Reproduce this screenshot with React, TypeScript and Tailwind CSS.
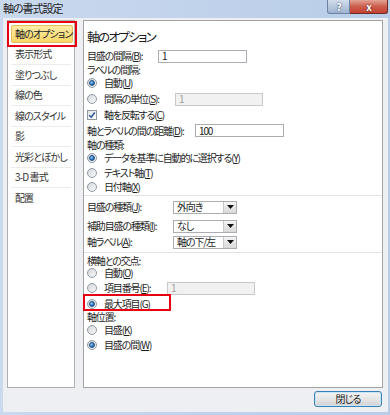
import type { ReactNode } from "react";

const jp = "[font-family:'Noto_Sans_CJK_JP',sans-serif] [font-feature-settings:'palt']";

function Key({ t, k, colon }: { t: string; k: string; colon?: boolean }) {
  return (
    <>
      {t}(<u>{k}</u>){colon ? ":" : ""}
    </>
  );
}

function Radio({ on }: { on?: boolean }) {
  return (
    <span className="flex h-[10px] w-[10px] shrink-0 items-center justify-center rounded-full border border-[#8e99a5] bg-linear-to-br from-[#d4d6d9] to-[#fafafa]">
      {on && (
        <span className="h-[6px] w-[6px] rounded-full border border-[#1d4f85] bg-radial-[at_35%_35%] from-[#a9d6f7] via-[#2f7ac4] to-[#1a548f]" />
      )}
    </span>
  );
}

function Check() {
  return (
    <span className="flex h-[10px] w-[10px] shrink-0 items-center justify-center border border-[#8e99a5] bg-linear-to-br from-[#dfe1e4] to-white">
      <svg width="8" height="8" viewBox="0 0 8 8">
        <path d="M1.2 4.2 L3.2 6.2 L6.8 1.5" fill="none" stroke="#2a4f9c" strokeWidth="1.5" />
      </svg>
    </span>
  );
}

function Input({ w, v, off }: { w: string; v: string; off?: boolean }) {
  return (
    <div
      className={`flex h-[13px] shrink-0 items-center border pl-[3px] text-[10px] leading-none ${w} ${
        off ? "border-[#c8c8c8] bg-[#f1f1f1] text-[#a0a0a0]" : "border-[#abadb3] bg-white text-[#222]"
      }`}
    >
      {v}
    </div>
  );
}

function Select({ v }: { v: string }) {
  return (
    <div className="flex h-[13px] w-[64px] shrink-0 items-stretch border border-[#abadb3] bg-white">
      <span className="flex flex-1 items-center pl-[3px] text-[10px] leading-none">{v}</span>
      <span className="flex w-[13px] items-center justify-center border-l border-[#c6c6c6] bg-linear-to-b from-[#f5f5f5] to-[#d8d8d8]">
        <svg width="7" height="4" viewBox="0 0 7 4">
          <path d="M0 0h7L3.5 4z" fill="#111" />
        </svg>
      </span>
    </div>
  );
}

function Row({ h, children }: { h: string; children: ReactNode }) {
  return <div className={`flex shrink-0 items-center whitespace-nowrap ${h}`}>{children}</div>;
}

function RadioRow({ h, on, children }: { h: string; on?: boolean; children: ReactNode }) {
  return (
    <Row h={h}>
      <Radio on={on} />
      <span className="ml-[7px] flex items-center">{children}</span>
    </Row>
  );
}

const sideItems = ["表示形式", "塗りつぶし", "線の色", "線のスタイル", "影", "光彩とぼかし", "3-D 書式", "配置"];

export default function App() {
  return (
    <div className={`relative flex h-[415px] w-[390px] flex-col overflow-hidden bg-linear-to-r from-[#c9d9ee] to-[#b9cde8] text-[10px] leading-none tracking-[-0.9px] text-[#1e1e1e] ${jp}`}>
      {/* title bar */}
      <div className="flex h-[18px] shrink-0 items-start">
        <span className="whitespace-nowrap pl-[3px] pt-[3px] text-[11px] leading-none tracking-[-1px] text-[#222]">軸の書式設定</span>
        <div className="ml-auto mr-[2px] flex">
          <div className="flex h-[14px] w-[23px] items-center justify-center rounded-bl-[3px] border border-t-0 border-[#6d83a3] bg-linear-to-b from-[#d3deec] to-[#9fb3d0] text-[10px] font-bold leading-none text-white [text-shadow:0_0_2px_#1d2d48]">
            ?
          </div>
          <div className="flex h-[14px] w-[38px] items-center justify-center rounded-br-[3px] border border-l-0 border-t-0 border-[#6e2a24] bg-linear-to-b from-[#e3a394] via-[#cc5d4d] to-[#c2422f] text-[10px] font-bold leading-none text-white [text-shadow:0_0_2px_#4a0e08]">
            x
          </div>
        </div>
      </div>

      {/* client area */}
      <div className="ml-[3px] mr-[2px] flex flex-1 flex-col bg-[#eeeff2] pl-[4px] pr-[5px] pt-[2px]">
        <div className="flex h-[368px] gap-[8px]">
          {/* left list */}
          <div className="flex w-[68px] shrink-0 flex-col border border-[#b0b0b0] bg-white pt-[3px]">
            <div className="flex h-[20.5px] shrink-0 items-center">
              <div className="ml-[3px] mr-[1px] flex h-[18px] flex-1 items-center whitespace-nowrap rounded-[2px] border border-[#e1bf5c] bg-linear-to-b from-[#fdeba4] to-[#f9d766] pl-[3px] text-[#222]">
                軸のオプション
              </div>
            </div>
            {sideItems.map((s, i) => (
              <div
                key={s}
                className={`mx-[3px] flex h-[20.5px] shrink-0 items-center whitespace-nowrap pl-[4px] text-[#333] ${
                  i < sideItems.length - 1 ? "border-b border-[#ececec]" : ""
                }`}
              >
                {s}
              </div>
            ))}
          </div>

          {/* options panel */}
          <div className="flex flex-1 flex-col border border-[#a3a3a3] bg-white pl-[3px] tracking-[-1.15px]">
            <div className="h-[28px] shrink-0 whitespace-nowrap pt-[10px] text-[12.5px] tracking-[-1.6px] text-[#1a1a1a]">軸のオプション</div>
            <Row h="h-[14px]">
              <span className="w-[71px]"><Key t="目盛の間隔" k="B" colon /></span>
              <Input w="w-[89px]" v="1" />
            </Row>
            <Row h="h-[14px]">ラベルの間隔:</Row>
            <RadioRow h="h-[12px]" on><Key t="自動" k="U" /></RadioRow>
            <RadioRow h="h-[20px]">
              <span className="w-[71px]"><Key t="間隔の単位" k="S" colon /></span>
              <Input w="w-[88px]" v="1" off />
            </RadioRow>
            <Row h="h-[12px]">
              <Check />
              <span className="ml-[7px]"><Key t="軸を反転する" k="C" /></span>
            </Row>
            <Row h="h-[19px]">
              <span className="w-[108px]"><Key t="軸とラベルの間の距離" k="D" colon /></span>
              <Input w="w-[89px]" v="100" />
            </Row>
            <Row h="h-[9px]">軸の種類:</Row>
            <RadioRow h="h-[17px]" on><Key t="データを基準に自動的に選択する" k="Y" /></RadioRow>
            <RadioRow h="h-[13px]"><Key t="テキスト軸" k="T" /></RadioRow>
            <RadioRow h="h-[16px]"><Key t="日付軸" k="X" /></RadioRow>
            <div className="-ml-[3px] h-[3px] shrink-0 border-t border-[#e2e2e2]" />
            <Row h="h-[18px]">
              <span className="w-[86px]"><Key t="目盛の種類" k="J" colon /></span>
              <Select v="外向き" />
            </Row>
            <Row h="h-[20px]">
              <span className="w-[86px]"><Key t="補助目盛の種類" k="I" colon /></span>
              <Select v="なし" />
            </Row>
            <Row h="h-[12px]">
              <span className="w-[86px]"><Key t="軸ラベル" k="A" colon /></span>
              <Select v="軸の下/左" />
            </Row>
            <div className="-ml-[3px] h-[6px] shrink-0 pt-[4px]">
              <div className="h-px bg-[#e2e2e2]" />
            </div>
            <Row h="h-[14px]">横軸との交点:</Row>
            <RadioRow h="h-[10px]"><Key t="自動" k="O" /></RadioRow>
            <RadioRow h="h-[20px]">
              <span className="w-[63px]"><Key t="項目番号" k="E" colon /></span>
              <Input w="w-[88px]" v="1" off />
            </RadioRow>
            <RadioRow h="h-[11px]" on><Key t="最大項目" k="G" /></RadioRow>
            <Row h="h-[16px]">軸位置:</Row>
            <RadioRow h="h-[10px]"><Key t="目盛" k="K" /></RadioRow>
            <RadioRow h="h-[20px]" on><Key t="目盛の間" k="W" /></RadioRow>
          </div>
        </div>

        <div className="mt-[3px] flex justify-end pr-[1px]">
          <button className="flex h-[16px] w-[68px] items-center justify-center rounded-[3px] border border-[#3c7fb1] bg-linear-to-b from-[#f4f4f4] via-[#e6e6e6] to-[#d2d2d2] text-[10px] leading-none text-[#1e1e1e] shadow-[inset_0_0_0_1px_#c9e6f7]">
            閉じる
          </button>
        </div>
      </div>
      <div className="h-[3px] shrink-0" />

      {/* annotation boxes */}
      <div className="absolute left-[7px] top-[21px] h-[26px] w-[70px] border-2 border-[#e60012]" />
      <div className="absolute left-[83px] top-[294px] h-[17px] w-[88px] border-2 border-[#e60012]" />
    </div>
  );
}
